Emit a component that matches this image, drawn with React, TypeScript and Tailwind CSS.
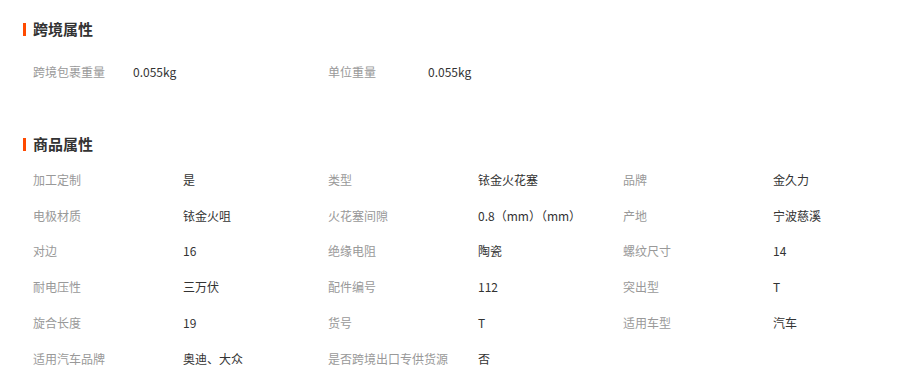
import React from 'react';

type Attr = { label: string; value: string };

const crossBorder: Attr[] = [
  { label: '跨境包裹重量', value: '0.055kg' },
  { label: '单位重量', value: '0.055kg' },
];

const productAttrs: Attr[] = [
  { label: '加工定制', value: '是' },
  { label: '类型', value: '铱金火花塞' },
  { label: '品牌', value: '金久力' },
  { label: '电极材质', value: '铱金火咀' },
  { label: '火花塞间隙', value: '0.8（mm）（mm）' },
  { label: '产地', value: '宁波慈溪' },
  { label: '对边', value: '16' },
  { label: '绝缘电阻', value: '陶瓷' },
  { label: '螺纹尺寸', value: '14' },
  { label: '耐电压性', value: '三万伏' },
  { label: '配件编号', value: '112' },
  { label: '突出型', value: 'T' },
  { label: '旋合长度', value: '19' },
  { label: '货号', value: 'T' },
  { label: '适用车型', value: '汽车' },
  { label: '适用汽车品牌', value: '奥迪、大众' },
  { label: '是否跨境出口专供货源', value: '否' },
];

function SectionTitle({ children }: { children: React.ReactNode }) {
  return (
    <div className="flex items-center h-[20px] pl-[23px]">
      <span className="w-[3px] h-[13px] bg-[#ff4a00] mr-[7px]" />
      <h3 className="text-[15px] leading-[20px] font-bold text-[#333]">{children}</h3>
    </div>
  );
}

export default function App() {
  return (
    <div
      className="w-[900px] h-[382px] bg-white overflow-hidden pt-[19px]"
      style={{ fontFamily: '"Noto Sans CJK SC", "Microsoft YaHei", sans-serif' }}
    >
      <SectionTitle>跨境属性</SectionTitle>

      {/* cross-border */}
      <div className="grid grid-cols-[295px_295px] pl-[33px] mt-[15px]">
        {crossBorder.map((a) => (
          <div key={a.label} className="flex h-[36px] items-center text-[12px]">
            <span className="w-[100px] text-[#999]">{a.label}</span>
            <span className="text-[#333]">{a.value}</span>
          </div>
        ))}
      </div>

      <div className="mt-[44px]">
        <SectionTitle>商品属性</SectionTitle>
      </div>

      {/* product attributes */}
      <div className="grid grid-cols-[295px_295px_295px] pl-[33px] mt-[8px]">
        {productAttrs.map((a) => (
          <div key={a.label} className="flex h-[35.8px] items-center text-[12px]">
            <span className="w-[150px] shrink-0 text-[#999] whitespace-nowrap">{a.label}</span>
            <span className="text-[#333] whitespace-pre">{a.value}</span>
          </div>
        ))}
      </div>
    </div>
  );
}
